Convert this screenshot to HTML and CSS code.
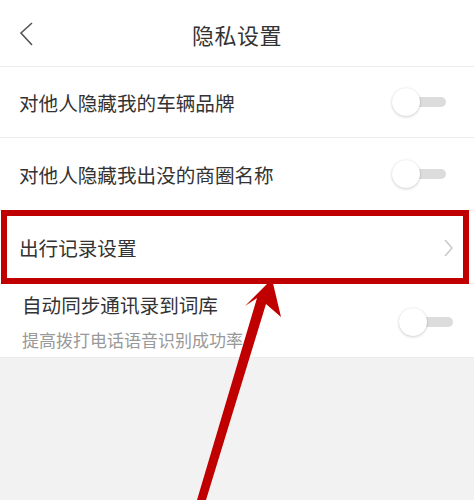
FILE: index.html
```html
<!DOCTYPE html>
<html lang="zh">
<head>
<meta charset="utf-8">
<title>隐私设置</title>
<link rel="stylesheet" href="styles.css">
</head>
<body>
<div class="page">
  <header class="header">
    <svg class="back" width="16" height="28" viewBox="0 0 16 28"><polyline points="13,2 2,12 13,24" fill="none" stroke="#555" stroke-width="1.6"/></svg>
    <h1 class="title">隐私设置</h1>
  </header>
  <ul class="list">
    <li class="row row-a">
      <span class="label">对他人隐藏我的车辆品牌</span>
      <span class="toggle"><span class="track"></span><span class="knob"></span></span>
    </li>
    <li class="row row-b">
      <span class="label">对他人隐藏我出没的商圈名称</span>
      <span class="toggle"><span class="track"></span><span class="knob"></span></span>
    </li>
    <li class="row row-c">
      <span class="label">出行记录设置</span>
      <svg class="chev" width="10" height="18" viewBox="0 0 10 18"><polyline points="1,1 8,9 1,17" fill="none" stroke="#c8c8c8" stroke-width="1.4"/></svg>
    </li>
    <li class="row row-d">
      <span class="texts">
        <span class="label">自动同步通讯录到词库</span>
        <span class="sub">提高拨打电话语音识别成功率</span>
      </span>
      <span class="toggle"><span class="track"></span><span class="knob"></span></span>
    </li>
  </ul>
  <svg class="annot" width="474" height="500" viewBox="0 0 474 500">
    <rect x="4" y="213" width="462" height="68" fill="none" stroke="#c00000" stroke-width="6"/>
    <polygon fill="#c00000" points="272,279 281,317 266,304 206,500 197,500 257,298 245,306"/>
  </svg>
</div>
</body>
</html>
```
FILE: styles.css
```css
html, body {
  margin: 0;
  padding: 0;
  background: #f2f2f2;
}
.page {
  position: relative;
  width: 474px;
  height: 500px;
  overflow: hidden;
  font-family: "Noto Sans CJK SC", "Noto Sans", sans-serif;
  color: #333;
}
.header {
  height: 66px;
  background: #fff;
  border-bottom: 1px solid #ececec;
  display: flex;
  align-items: center;
  justify-content: center;
  position: relative;
}
.back {
  position: absolute;
  left: 19px;
  top: 21px;
}
.title {
  margin: 0;
  font-size: 22px;
  font-weight: normal;
  color: #333;
  line-height: 30px;
  margin-top: 2px;
  letter-spacing: 0.5px;
}
.list {
  list-style: none;
  margin: 0;
  padding: 0;
  background: #fff;
}
.row {
  display: flex;
  align-items: center;
  justify-content: space-between;
  padding: 0 28px 0 19px;
  border-bottom: 1px solid #ececec;
  box-sizing: border-box;
}
.row-a { height: 71px; }
.row-b { height: 73px; }
.row-c { height: 73px; padding-right: 20px; }
.row-d { height: 74px; padding: 0 21px 0 22px; }
.label {
  font-size: 19.6px;
  line-height: 26px;
  color: #333;
}
.row-a .label { margin-top: 2px; }
.row-b .label { margin-top: 2px; }
.row-c .label { margin-top: 2px; }
.texts {
  display: flex;
  flex-direction: column;
  padding-top: 2px;
}
.sub {
  font-size: 17px;
  line-height: 22px;
  color: #999;
  margin-top: 11px;
}
.toggle {
  position: relative;
  width: 54px;
  height: 28px;
  flex: none;
}
.row-d .toggle { margin-top: 2px; }
.track {
  position: absolute;
  left: 14px;
  right: 0;
  top: 9px;
  height: 10px;
  border-radius: 5px;
  background: #dcdcdc;
}
.knob {
  position: absolute;
  left: 0;
  top: 0;
  width: 28px;
  height: 28px;
  border-radius: 50%;
  background: #fff;
  box-shadow: 0 1px 3px rgba(0,0,0,0.18), 0 0 1px rgba(0,0,0,0.12);
}
.chev {
  flex: none;
  margin-top: 2px;
}
.annot {
  position: absolute;
  left: 0;
  top: 0;
  pointer-events: none;
}
```
